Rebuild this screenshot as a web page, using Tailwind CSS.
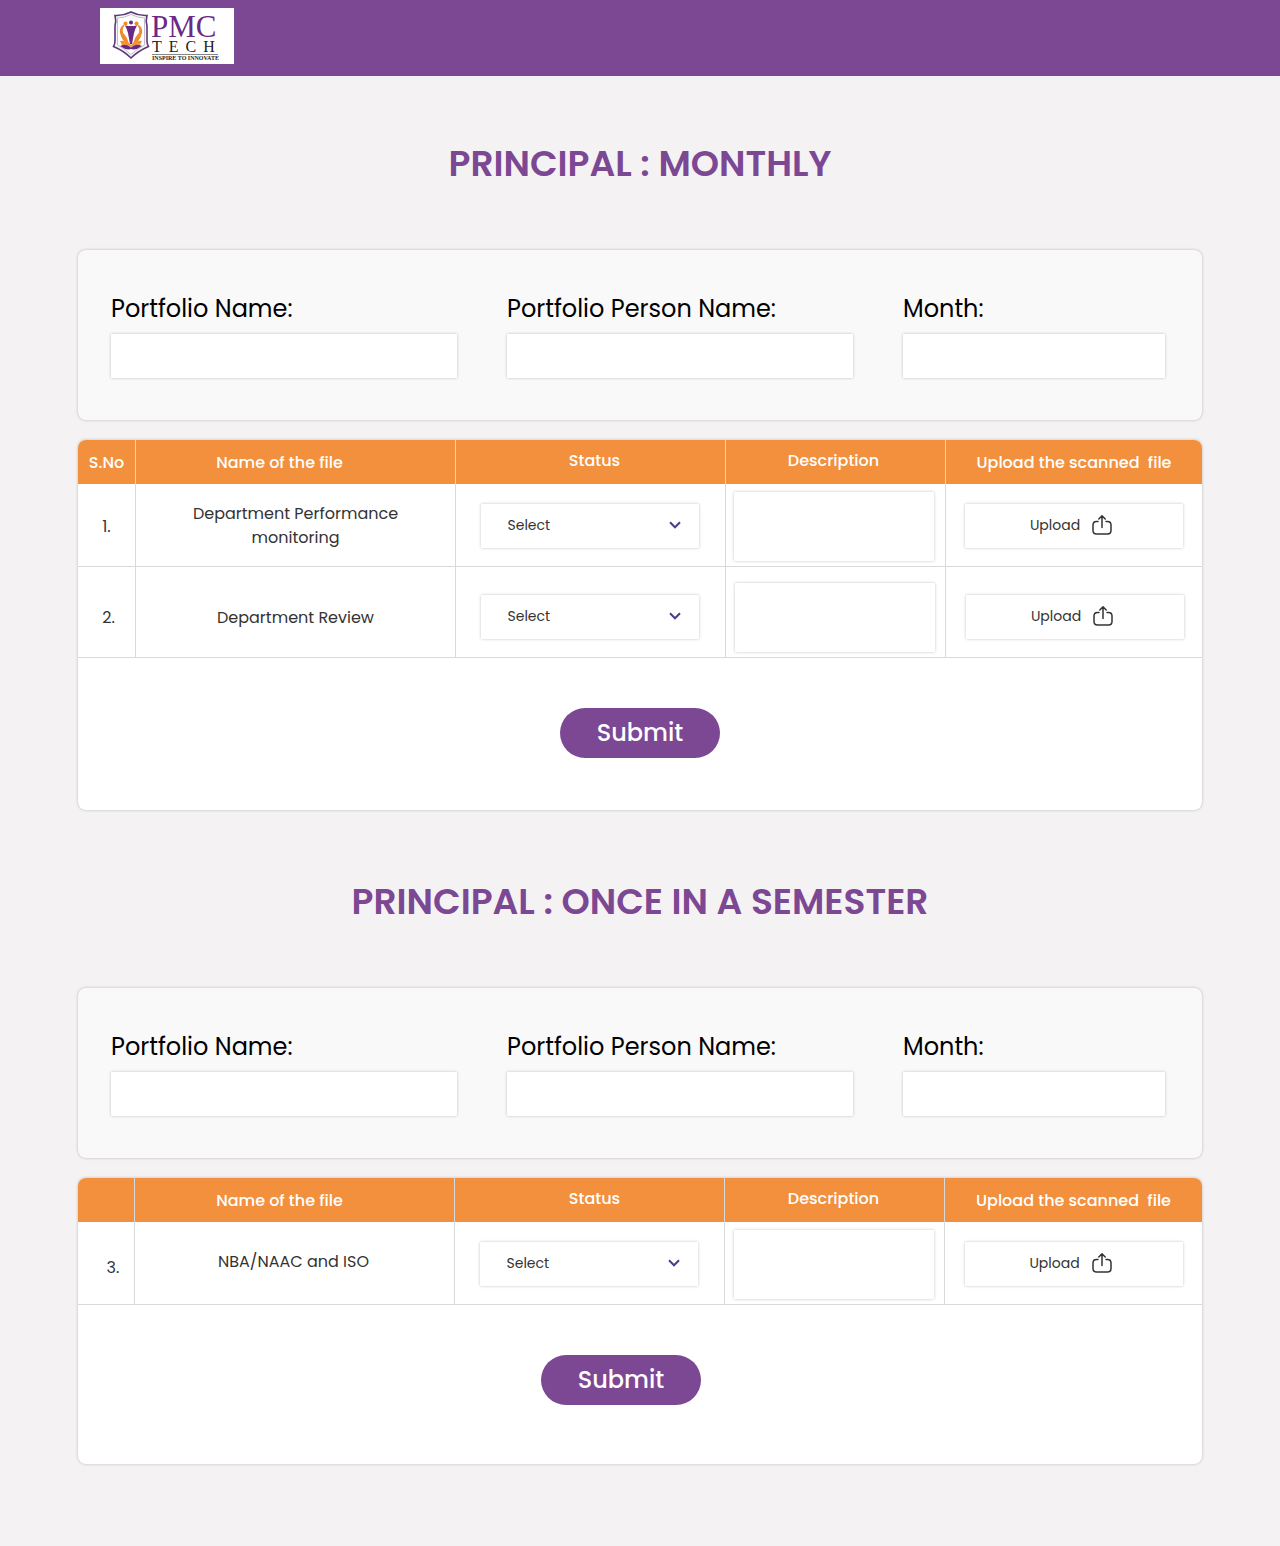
<!DOCTYPE html>
<html lang="en">
<head>
<meta charset="utf-8">
<meta name="viewport" content="width=device-width, initial-scale=1">
<title>PMC Tech – Principal</title>
<script src="https://cdn.jsdelivr.net/npm/@tailwindcss/browser@4"></script>
</head>
<body class="min-h-screen bg-[#f4f2f3] font-['Poppins','Inter',sans-serif] text-[#333]">
<svg class="hidden" aria-hidden="true">
  <symbol id="upload" viewBox="0 0 20 20"><path d="M6 6.500H4.500Q1 6.500 1 10V15.500Q1 19 4.500 19H15.500Q19 19 19 15.500V10Q19 6.500 15.500 6.500H14M10 12.500V1M6.800 4L10 .8L13.200 4" fill="none" stroke="currentColor" stroke-width="1.500" stroke-linecap="round" stroke-linejoin="round"/></symbol>
  <symbol id="chevron" viewBox="0 0 12 8"><path d="M1 1.300L6 6.300L11 1.300" fill="none" stroke="currentColor" stroke-width="2"/></symbol>
</svg>

<header class="h-[76px] bg-[#7c4793] px-[100px] pt-2">
  <a href="#" aria-label="PMC Tech home" class="block h-14 w-[134px] bg-white">
    <svg class="h-14 w-[134px]" viewBox="0 0 134 56">
      <path d="M31 4Q23 8 15 7.500Q16.500 13 15 18V33Q15 36 13.500 38.500Q24 43 31 50Q38 43 48.500 38.500Q47 36 47 33V18Q45.500 13 47 7.500Q39 8 31 4Z" fill="#f6f5f7" stroke="#5a3a78" stroke-width="1.600"/>
      <path d="M31 6.500Q24 10 17.500 10V37Q25 41 31 46.500Q37 41 44.500 37V10Q38 10 31 6.500Z" fill="#fff" stroke="#b6adc0" stroke-width=".8"/>
      <circle cx="25.500" cy="15.500" r="2" fill="#f08a2c"/><circle cx="36.500" cy="15.500" r="2" fill="#f08a2c"/>
      <path d="M24 17Q20 23 24 27Q27 30 28 35Q23 32 22 29Q18 21 24 17ZM38 17Q42 23 38 27Q35 30 34 35Q39 32 40 29Q44 21 38 17Z" fill="#f08a2c" stroke="#f08a2c" stroke-width="1.200"/>
      <circle cx="31" cy="14.500" r="2" fill="#692985"/>
      <path d="M25 17.500Q31 18.500 37 17.500Q35 21 34 25L32 36H30L28 25Q27 21 25 17.500Z" fill="#692985"/>
      <path d="M20 33Q27 32 31 37Q35 32 42 33L40 37Q34 36 31 39Q28 36 22 37Z" fill="#f7932c"/>
      <path d="M20 38Q27 35 31 39.500Q35 35 42 38Q36 42.500 31 41Q26 42.500 20 38Z" fill="#692985"/>
      <text x="51" y="29" class="fill-[#692985] font-['Liberation_Serif',serif] text-[31px]">PMC</text>
      <text x="52" y="44" class="fill-[#222] font-['Liberation_Serif',serif] text-base tracking-[7px]">TECH</text>
      <path d="M52 46.500H118" stroke="#888" stroke-width="1"/>
      <text x="52" y="52" class="fill-[#222] font-['Liberation_Serif',serif] text-[6px] font-bold">INSPIRE TO INNOVATE</text>
    </svg>
  </a>
</header>

<main class="px-[78px] pb-[82px]">
  <section>
    <h1 class="pt-[61px] text-center text-4xl leading-[54px] font-semibold text-[#7c4793]">PRINCIPAL : MONTHLY</h1>
    <form>
      <div class="mt-[59px] grid grid-cols-[346fr_346fr_262fr] gap-x-[50px] rounded-lg bg-[#f9f9f9] pt-[41px] pr-[37px] pb-[42px] pl-[33px] text-2xl leading-9 text-black shadow-[0_0_3px_rgba(0,0,0,0.25)]">
        <label class="flex flex-col gap-[7px]">Portfolio Name:<input type="text" class="h-11 w-full rounded-[1px] bg-white px-3 text-base shadow-[0_0_3px_rgba(0,0,0,0.25)]"></label>
        <label class="flex flex-col gap-[7px]">Portfolio Person Name:<input type="text" class="h-11 w-full rounded-[1px] bg-white px-3 text-base shadow-[0_0_3px_rgba(0,0,0,0.25)]"></label>
        <label class="flex flex-col gap-[7px]">Month:<input type="text" class="h-11 w-full rounded-[1px] bg-white px-3 text-base shadow-[0_0_3px_rgba(0,0,0,0.25)]"></label>
      </div>
      <div class="mt-5 overflow-hidden rounded-lg bg-white pb-[52px] shadow-[0_0_3px_rgba(0,0,0,0.25)]">
        <table class="w-full table-fixed border-separate border-spacing-0 text-center text-base leading-6">
          <colgroup><col class="w-[58px]"><col><col class="w-[270px]"><col class="w-[220px]"><col class="w-[256px]"></colgroup>
          <thead class="bg-[#f2903e] text-white">
            <tr class="h-11">
              <th scope="col" class="border-r border-[#d9d9d9] pt-0.5 font-medium">S.No</th>
              <th scope="col" class="border-r border-[#d9d9d9] pt-0.5 pr-8 font-medium">Name of the file</th>
              <th scope="col" class="border-r border-[#d9d9d9] pb-0.5 pl-2 font-medium">Status</th>
              <th scope="col" class="border-r border-[#d9d9d9] pr-1 pb-0.5 font-medium">Description</th>
              <th scope="col" class="pt-0.5 font-medium whitespace-pre">Upload the scanned  file</th>
            </tr>
          </thead>
          <tbody>
            <tr class="h-[83px]">
              <td class="border-r border-b border-[#d9d9d9] pt-1">1.</td>
              <td class="border-r border-b border-[#d9d9d9] px-10 pt-0.5">Department Performance<br>monitoring</td>
              <td class="border-r border-b border-[#d9d9d9] pt-0.5 pr-0.5">
                <div class="relative mx-auto h-11 w-[218px] text-sm">
                  <select aria-label="Status of department performance monitoring" class="h-full w-full appearance-none rounded-[1px] bg-white px-[27px] pb-0.5 shadow-[0_0_3px_rgba(0,0,0,0.25)]"><option>Select</option></select>
                  <svg class="pointer-events-none absolute top-[17px] right-[18px] h-2 w-3 text-[#45408c]" aria-hidden="true"><use href="#chevron"/></svg>
                </div>
              </td>
              <td class="border-r border-b border-[#d9d9d9] pt-0.5 pr-1"><textarea aria-label="Description of department performance monitoring" class="mx-auto block h-[69px] w-[200px] resize-none rounded-[1px] bg-white p-2 text-sm shadow-[0_0_3px_rgba(0,0,0,0.25)]"></textarea></td>
              <td class="border-b border-[#d9d9d9] pt-0.5"><button type="button" class="mx-auto flex h-11 w-[218px] items-center justify-center gap-3 rounded-[1px] bg-white pr-1.5 pb-0.5 text-sm shadow-[0_0_3px_rgba(0,0,0,0.25)]">Upload<svg class="size-5" aria-hidden="true"><use href="#upload"/></svg></button></td>
            </tr>
            <tr class="h-[91px]">
              <td class="border-r border-b border-[#d9d9d9] pt-3 pl-1">2.</td>
              <td class="border-r border-b border-[#d9d9d9] px-10 pt-3">Department Review</td>
              <td class="border-r border-b border-[#d9d9d9] pt-2.5 pr-0.5">
                <div class="relative mx-auto h-11 w-[218px] text-sm">
                  <select aria-label="Status of department review" class="h-full w-full appearance-none rounded-[1px] bg-white px-[27px] pb-0.5 shadow-[0_0_3px_rgba(0,0,0,0.25)]"><option>Select</option></select>
                  <svg class="pointer-events-none absolute top-[17px] right-[18px] h-2 w-3 text-[#45408c]" aria-hidden="true"><use href="#chevron"/></svg>
                </div>
              </td>
              <td class="border-r border-b border-[#d9d9d9] pt-2.5 pr-0.5"><textarea aria-label="Description of department review" class="mx-auto block h-[69px] w-[200px] resize-none rounded-[1px] bg-white p-2 text-sm shadow-[0_0_3px_rgba(0,0,0,0.25)]"></textarea></td>
              <td class="border-b border-[#d9d9d9] pt-2.5 pl-0.5"><button type="button" class="mx-auto flex h-11 w-[218px] items-center justify-center gap-3 rounded-[1px] bg-white pr-1.5 pb-0.5 text-sm shadow-[0_0_3px_rgba(0,0,0,0.25)]">Upload<svg class="size-5" aria-hidden="true"><use href="#upload"/></svg></button></td>
            </tr>
          </tbody>
        </table>
        <button type="submit" class="mx-auto mt-[50px] block h-[50px] w-40 rounded-full bg-[#7c4793] text-2xl font-medium text-white">Submit</button>
      </div>
    </form>
  </section>

  <section>
    <h2 class="pt-[65px] text-center text-4xl leading-[54px] font-semibold text-[#7c4793]">PRINCIPAL : ONCE IN A SEMESTER</h2>
    <form>
      <div class="mt-[59px] grid grid-cols-[346fr_346fr_262fr] gap-x-[50px] rounded-lg bg-[#f9f9f9] pt-[41px] pr-[37px] pb-[42px] pl-[33px] text-2xl leading-9 text-black shadow-[0_0_3px_rgba(0,0,0,0.25)]">
        <label class="flex flex-col gap-[7px]">Portfolio Name:<input type="text" class="h-11 w-full rounded-[1px] bg-white px-3 text-base shadow-[0_0_3px_rgba(0,0,0,0.25)]"></label>
        <label class="flex flex-col gap-[7px]">Portfolio Person Name:<input type="text" class="h-11 w-full rounded-[1px] bg-white px-3 text-base shadow-[0_0_3px_rgba(0,0,0,0.25)]"></label>
        <label class="flex flex-col gap-[7px]">Month:<input type="text" class="h-11 w-full rounded-[1px] bg-white px-3 text-base shadow-[0_0_3px_rgba(0,0,0,0.25)]"></label>
      </div>
      <div class="mt-5 overflow-hidden rounded-lg bg-white pb-[59px] shadow-[0_0_3px_rgba(0,0,0,0.25)]">
        <table class="w-full table-fixed border-separate border-spacing-0 text-center text-base leading-6">
          <colgroup><col class="w-[57px]"><col><col class="w-[270px]"><col class="w-[220px]"><col class="w-[257px]"></colgroup>
          <thead class="bg-[#f2903e] text-white">
            <tr class="h-11">
              <td class="border-r border-[#d9d9d9]"></td>
              <th scope="col" class="border-r border-[#d9d9d9] pt-0.5 pr-[30px] font-medium">Name of the file</th>
              <th scope="col" class="border-r border-[#d9d9d9] pb-0.5 pl-2.5 font-medium">Status</th>
              <th scope="col" class="border-r border-[#d9d9d9] pr-0.5 pb-0.5 font-medium">Description</th>
              <th scope="col" class="pt-0.5 font-medium whitespace-pre">Upload the scanned  file</th>
            </tr>
          </thead>
          <tbody>
            <tr class="h-[83px]">
              <td class="border-r border-b border-[#d9d9d9] pt-2.5 pl-3.5">3.</td>
              <td class="border-r border-b border-[#d9d9d9] pr-0.5 pb-0.5">NBA/NAAC and ISO</td>
              <td class="border-r border-b border-[#d9d9d9] pt-0.5 pr-0.5">
                <div class="relative mx-auto h-11 w-[218px] text-sm">
                  <select aria-label="Status of NBA/NAAC and ISO" class="h-full w-full appearance-none rounded-[1px] bg-white px-[27px] pb-0.5 shadow-[0_0_3px_rgba(0,0,0,0.25)]"><option>Select</option></select>
                  <svg class="pointer-events-none absolute top-[17px] right-[18px] h-2 w-3 text-[#45408c]" aria-hidden="true"><use href="#chevron"/></svg>
                </div>
              </td>
              <td class="border-r border-b border-[#d9d9d9] pt-0.5 pr-0.5"><textarea aria-label="Description of NBA/NAAC and ISO" class="mx-auto block h-[69px] w-[200px] resize-none rounded-[1px] bg-white p-2 text-sm shadow-[0_0_3px_rgba(0,0,0,0.25)]"></textarea></td>
              <td class="border-b border-[#d9d9d9] pt-0.5"><button type="button" class="mx-auto flex h-11 w-[218px] items-center justify-center gap-3 rounded-[1px] bg-white pr-1.5 pb-0.5 text-sm shadow-[0_0_3px_rgba(0,0,0,0.25)]">Upload<svg class="size-5" aria-hidden="true"><use href="#upload"/></svg></button></td>
            </tr>
          </tbody>
        </table>
        <div class="flex justify-center pt-[50px] pr-[38px]">
          <button type="submit" class="h-[50px] w-40 rounded-full bg-[#7c4793] text-2xl font-medium text-white">Submit</button>
        </div>
      </div>
    </form>
  </section>
</main>
</body>
</html>
